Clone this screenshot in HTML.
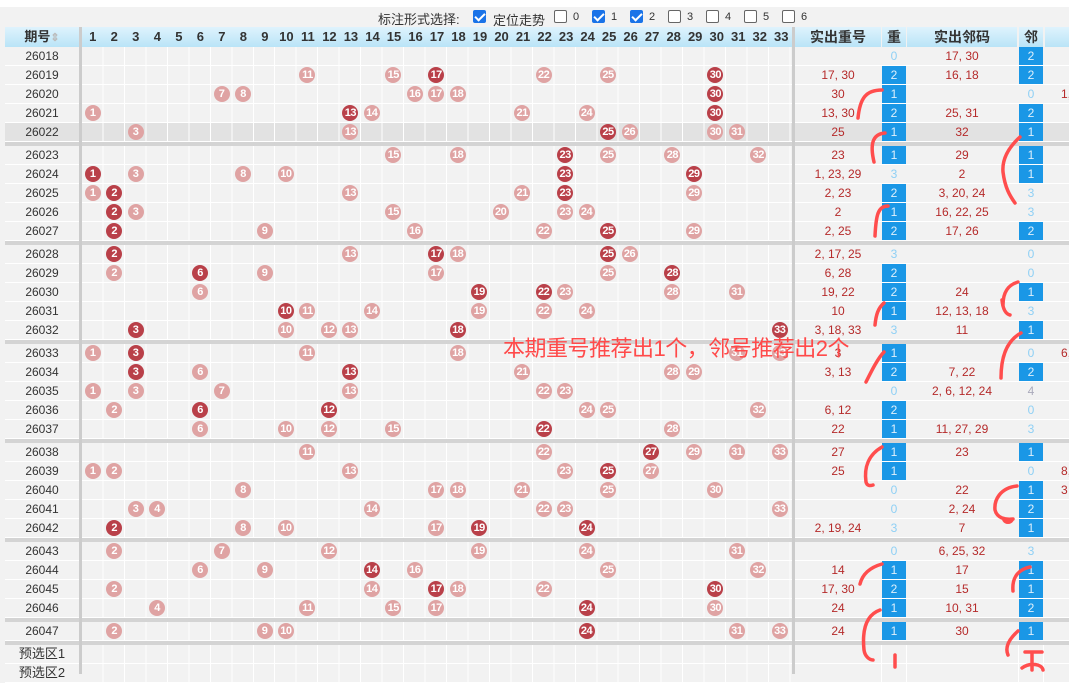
<!DOCTYPE html>
<html><head><meta charset="utf-8"><style>
*{margin:0;padding:0;box-sizing:border-box}
body{width:1069px;height:674px;overflow:hidden;background:#f2f2f2;font-family:"Liberation Sans","Noto Sans CJK SC",sans-serif;position:relative}
.top{position:absolute;left:0;top:0;width:1069px;height:7px;background:#fff}
.bar{position:absolute;top:9px;left:378px;font-size:13px;color:#333;white-space:nowrap}
.cb{position:absolute;top:10px;width:13px;height:13px;border:1px solid #666;border-radius:2px;background:#fff}
.cb.on{background:#1a73e8;border-color:#1a73e8}
.cb.on:after{content:"";position:absolute;left:3px;top:0px;width:4px;height:8px;border:solid #fff;border-width:0 2px 2px 0;transform:rotate(45deg)}
.lb{position:absolute;top:11px;font-size:11px;color:#333}
.hd{position:absolute;top:27px;height:20px;background:linear-gradient(#dff3fd,#b9e4f7);font-weight:bold;font-size:13px;color:#333;text-align:center;line-height:20px}
.r{position:absolute;left:5px;width:1064px;height:19px;border-bottom:1px solid #fff}
.r.g{background:#e2e2e2}
.p{position:absolute;left:0;width:74px;text-align:center;font-size:12px;line-height:18px;color:#333}
.grid{position:absolute;left:77px;width:710px;height:18px;background:repeating-linear-gradient(90deg,transparent 0 20.47px,#fff 20.47px 21.47px)}
.vl{position:absolute;top:27px;width:3px;height:647px;background:#ccc}
.sep{position:absolute;left:5px;width:1064px;height:4px;background:#d4d4d4}
.b{position:absolute;top:1px;width:16px;height:16px;border-radius:50%;background:#dfa3a3;color:#fff;font-style:normal;font-weight:bold;font-size:11px;line-height:16px;text-align:center;letter-spacing:-0.5px}
.b.d{background:#b94049}
.t1{position:absolute;left:790px;width:86px;text-align:center;font-size:12px;line-height:18px;color:#b52a2a}
.t2{position:absolute;left:902px;width:110px;text-align:center;font-size:12px;line-height:18px;color:#b52a2a}
.x{position:absolute;left:1056px;font-size:12px;line-height:18px;color:#b52a2a}
.k1,.k2{position:absolute;top:0;width:24px;height:18px;text-align:center;font-size:12px;line-height:18px;color:#dff0fb;background:#1a97e6}
.k1{left:877px}.k2{left:1014px}
.k1.n,.k2.n{background:none;color:#8fd0f5}
.cl{position:absolute;top:0;width:1px;height:18px;background:#fff}
.c1{left:79.7px}.c2{left:101.2px}.c3{left:122.6px}.c4{left:144.1px}.c5{left:165.6px}.c6{left:187.1px}.c7{left:208.5px}.c8{left:230px}.c9{left:251.5px}.c10{left:272.9px}.c11{left:294.4px}.c12{left:315.9px}.c13{left:337.4px}.c14{left:358.8px}.c15{left:380.3px}.c16{left:401.8px}.c17{left:423.2px}.c18{left:444.7px}.c19{left:466.2px}.c20{left:487.6px}.c21{left:509.1px}.c22{left:530.6px}.c23{left:552.1px}.c24{left:573.5px}.c25{left:595px}.c26{left:616.5px}.c27{left:637.9px}.c28{left:659.4px}.c29{left:680.9px}.c30{left:702.4px}.c31{left:723.8px}.c32{left:745.3px}.c33{left:766.8px}
.note{position:absolute;left:503px;top:331px;font-size:22px;color:#ff4a4a;white-space:nowrap;letter-spacing:-0.5px}
</style></head><body>
<div class="top"></div>
<div class="bar">标注形式选择:</div>
<span class="cb on" style="left:473px"></span><span class="lb" style="left:493px;font-size:13px;top:10px">定位走势</span>
<span class="cb" style="left:554px"></span><span class="lb" style="left:573px">0</span>
<span class="cb on" style="left:592px"></span><span class="lb" style="left:611px">1</span>
<span class="cb on" style="left:630px"></span><span class="lb" style="left:649px">2</span>
<span class="cb" style="left:668px"></span><span class="lb" style="left:687px">3</span>
<span class="cb" style="left:706px"></span><span class="lb" style="left:725px">4</span>
<span class="cb" style="left:744px"></span><span class="lb" style="left:763px">5</span>
<span class="cb" style="left:782px"></span><span class="lb" style="left:801px">6</span>

<div class="hd" style="left:5px;width:74px">期号<span style="color:#bbb;font-size:11px">⇕</span></div>
<div class="hd" style="left:82px;width:710px;background:linear-gradient(#dff3fd,#b9e4f7);display:flex">
<span style="flex:1">1</span><span style="flex:1">2</span><span style="flex:1">3</span><span style="flex:1">4</span><span style="flex:1">5</span><span style="flex:1">6</span><span style="flex:1">7</span><span style="flex:1">8</span><span style="flex:1">9</span><span style="flex:1">10</span><span style="flex:1">11</span><span style="flex:1">12</span><span style="flex:1">13</span><span style="flex:1">14</span><span style="flex:1">15</span><span style="flex:1">16</span><span style="flex:1">17</span><span style="flex:1">18</span><span style="flex:1">19</span><span style="flex:1">20</span><span style="flex:1">21</span><span style="flex:1">22</span><span style="flex:1">23</span><span style="flex:1">24</span><span style="flex:1">25</span><span style="flex:1">26</span><span style="flex:1">27</span><span style="flex:1">28</span><span style="flex:1">29</span><span style="flex:1">30</span><span style="flex:1">31</span><span style="flex:1">32</span><span style="flex:1">33</span></div>
<div class="hd" style="left:795px;width:86px;font-size:14px">实出重号</div>
<div class="hd" style="left:882px;width:24px;font-size:14px">重</div>
<div class="hd" style="left:907px;width:110px;font-size:14px">实出邻码</div>
<div class="hd" style="left:1019px;width:24px;font-size:14px">邻</div>
<div class="hd" style="left:1045px;width:24px"></div>

<!-- group 1 -->
<div class="r" style="top:47px"><div class="p">26018</div><div class="grid"></div><span class="k1 n">0</span><div class="t2">17, 30</div><span class="k2">2</span></div>
<div class="r" style="top:66px"><div class="p">26019</div><div class="grid"></div><i class="b c11">11</i><i class="b c15">15</i><i class="b d c17">17</i><i class="b c22">22</i><i class="b c25">25</i><i class="b d c30">30</i><div class="t1">17, 30</div><span class="k1">2</span><div class="t2">16, 18</div><span class="k2">2</span></div>
<div class="r" style="top:85px"><div class="p">26020</div><div class="grid"></div><i class="b c7">7</i><i class="b c8">8</i><i class="b c16">16</i><i class="b c17">17</i><i class="b c18">18</i><i class="b d c30">30</i><div class="t1">30</div><span class="k1">1</span><span class="k2 n">0</span><div class="x">1,</div></div>
<div class="r" style="top:104px"><div class="p">26021</div><div class="grid"></div><i class="b c1">1</i><i class="b d c13">13</i><i class="b c14">14</i><i class="b c21">21</i><i class="b c24">24</i><i class="b d c30">30</i><div class="t1">13, 30</div><span class="k1">2</span><div class="t2">25, 31</div><span class="k2">2</span></div>
<div class="r g" style="top:123px"><div class="p">26022</div><div class="grid"></div><i class="b c3">3</i><i class="b c13">13</i><i class="b d c25">25</i><i class="b c26">26</i><i class="b c30">30</i><i class="b c31">31</i><div class="t1">25</div><span class="k1">1</span><div class="t2">32</div><span class="k2">1</span></div>
<div class="sep" style="top:142px"></div>
<!-- group 2 -->
<div class="r" style="top:146px"><div class="p">26023</div><div class="grid"></div><i class="b c15">15</i><i class="b c18">18</i><i class="b d c23">23</i><i class="b c25">25</i><i class="b c28">28</i><i class="b c32">32</i><div class="t1">23</div><span class="k1">1</span><div class="t2">29</div><span class="k2">1</span></div>
<div class="r" style="top:165px"><div class="p">26024</div><div class="grid"></div><i class="b d c1">1</i><i class="b c3">3</i><i class="b c8">8</i><i class="b c10">10</i><i class="b d c23">23</i><i class="b d c29">29</i><div class="t1">1, 23, 29</div><span class="k1 n">3</span><div class="t2">2</div><span class="k2">1</span></div>
<div class="r" style="top:184px"><div class="p">26025</div><div class="grid"></div><i class="b c1">1</i><i class="b d c2">2</i><i class="b c13">13</i><i class="b c21">21</i><i class="b d c23">23</i><i class="b c29">29</i><div class="t1">2, 23</div><span class="k1">2</span><div class="t2">3, 20, 24</div><span class="k2 n">3</span></div>
<div class="r" style="top:203px"><div class="p">26026</div><div class="grid"></div><i class="b d c2">2</i><i class="b c3">3</i><i class="b c15">15</i><i class="b c20">20</i><i class="b c23">23</i><i class="b c24">24</i><div class="t1">2</div><span class="k1">1</span><div class="t2">16, 22, 25</div><span class="k2 n">3</span></div>
<div class="r" style="top:222px"><div class="p">26027</div><div class="grid"></div><i class="b d c2">2</i><i class="b c9">9</i><i class="b c16">16</i><i class="b c22">22</i><i class="b d c25">25</i><i class="b c29">29</i><div class="t1">2, 25</div><span class="k1">2</span><div class="t2">17, 26</div><span class="k2">2</span></div>
<div class="sep" style="top:241px"></div>
<!-- group 3 -->
<div class="r" style="top:245px"><div class="p">26028</div><div class="grid"></div><i class="b d c2">2</i><i class="b c13">13</i><i class="b d c17">17</i><i class="b c18">18</i><i class="b d c25">25</i><i class="b c26">26</i><div class="t1">2, 17, 25</div><span class="k1 n">3</span><span class="k2 n">0</span></div>
<div class="r" style="top:264px"><div class="p">26029</div><div class="grid"></div><i class="b c2">2</i><i class="b d c6">6</i><i class="b c9">9</i><i class="b c17">17</i><i class="b c25">25</i><i class="b d c28">28</i><div class="t1">6, 28</div><span class="k1">2</span><span class="k2 n">0</span></div>
<div class="r" style="top:283px"><div class="p">26030</div><div class="grid"></div><i class="b c6">6</i><i class="b d c19">19</i><i class="b d c22">22</i><i class="b c23">23</i><i class="b c28">28</i><i class="b c31">31</i><div class="t1">19, 22</div><span class="k1">2</span><div class="t2">24</div><span class="k2">1</span></div>
<div class="r" style="top:302px"><div class="p">26031</div><div class="grid"></div><i class="b d c10">10</i><i class="b c11">11</i><i class="b c14">14</i><i class="b c19">19</i><i class="b c22">22</i><i class="b c24">24</i><div class="t1">10</div><span class="k1">1</span><div class="t2">12, 13, 18</div><span class="k2 n">3</span></div>
<div class="r" style="top:321px"><div class="p">26032</div><div class="grid"></div><i class="b d c3">3</i><i class="b c10">10</i><i class="b c12">12</i><i class="b c13">13</i><i class="b d c18">18</i><i class="b d c33">33</i><div class="t1">3, 18, 33</div><span class="k1 n">3</span><div class="t2">11</div><span class="k2">1</span></div>
<div class="sep" style="top:340px"></div>
<!-- group 4 -->
<div class="r" style="top:344px"><div class="p">26033</div><div class="grid"></div><i class="b c1">1</i><i class="b d c3">3</i><i class="b c11">11</i><i class="b c18">18</i><i class="b c31">31</i><i class="b c33">33</i><div class="t1">3</div><span class="k1">1</span><span class="k2 n">0</span><div class="x">6,</div></div>
<div class="r" style="top:363px"><div class="p">26034</div><div class="grid"></div><i class="b d c3">3</i><i class="b c6">6</i><i class="b d c13">13</i><i class="b c21">21</i><i class="b c28">28</i><i class="b c29">29</i><div class="t1">3, 13</div><span class="k1">2</span><div class="t2">7, 22</div><span class="k2">2</span></div>
<div class="r" style="top:382px"><div class="p">26035</div><div class="grid"></div><i class="b c1">1</i><i class="b c3">3</i><i class="b c7">7</i><i class="b c13">13</i><i class="b c22">22</i><i class="b c23">23</i><span class="k1 n">0</span><div class="t2">2, 6, 12, 24</div><span class="k2 n" style="color:#aab">4</span></div>
<div class="r" style="top:401px"><div class="p">26036</div><div class="grid"></div><i class="b c2">2</i><i class="b d c6">6</i><i class="b d c12">12</i><i class="b c24">24</i><i class="b c25">25</i><i class="b c32">32</i><div class="t1">6, 12</div><span class="k1">2</span><span class="k2 n">0</span></div>
<div class="r" style="top:420px"><div class="p">26037</div><div class="grid"></div><i class="b c6">6</i><i class="b c10">10</i><i class="b c12">12</i><i class="b c15">15</i><i class="b d c22">22</i><i class="b c28">28</i><div class="t1">22</div><span class="k1">1</span><div class="t2">11, 27, 29</div><span class="k2 n">3</span></div>
<div class="sep" style="top:439px"></div>
<!-- group 5 -->
<div class="r" style="top:443px"><div class="p">26038</div><div class="grid"></div><i class="b c11">11</i><i class="b c22">22</i><i class="b d c27">27</i><i class="b c29">29</i><i class="b c31">31</i><i class="b c33">33</i><div class="t1">27</div><span class="k1">1</span><div class="t2">23</div><span class="k2">1</span></div>
<div class="r" style="top:462px"><div class="p">26039</div><div class="grid"></div><i class="b c1">1</i><i class="b c2">2</i><i class="b c13">13</i><i class="b c23">23</i><i class="b d c25">25</i><i class="b c27">27</i><div class="t1">25</div><span class="k1">1</span><span class="k2 n">0</span><div class="x">8,</div></div>
<div class="r" style="top:481px"><div class="p">26040</div><div class="grid"></div><i class="b c8">8</i><i class="b c17">17</i><i class="b c18">18</i><i class="b c21">21</i><i class="b c25">25</i><i class="b c30">30</i><span class="k1 n">0</span><div class="t2">22</div><span class="k2">1</span><div class="x">3</div></div>
<div class="r" style="top:500px"><div class="p">26041</div><div class="grid"></div><i class="b c3">3</i><i class="b c4">4</i><i class="b c14">14</i><i class="b c22">22</i><i class="b c23">23</i><i class="b c33">33</i><span class="k1 n">0</span><div class="t2">2, 24</div><span class="k2">2</span></div>
<div class="r" style="top:519px"><div class="p">26042</div><div class="grid"></div><i class="b d c2">2</i><i class="b c8">8</i><i class="b c10">10</i><i class="b c17">17</i><i class="b d c19">19</i><i class="b d c24">24</i><div class="t1">2, 19, 24</div><span class="k1 n">3</span><div class="t2">7</div><span class="k2">1</span></div>
<div class="sep" style="top:538px"></div>
<!-- group 6 -->
<div class="r" style="top:542px"><div class="p">26043</div><div class="grid"></div><i class="b c2">2</i><i class="b c7">7</i><i class="b c12">12</i><i class="b c19">19</i><i class="b c24">24</i><i class="b c31">31</i><span class="k1 n">0</span><div class="t2">6, 25, 32</div><span class="k2 n">3</span></div>
<div class="r" style="top:561px"><div class="p">26044</div><div class="grid"></div><i class="b c6">6</i><i class="b c9">9</i><i class="b d c14">14</i><i class="b c16">16</i><i class="b c25">25</i><i class="b c32">32</i><div class="t1">14</div><span class="k1">1</span><div class="t2">17</div><span class="k2">1</span></div>
<div class="r" style="top:580px"><div class="p">26045</div><div class="grid"></div><i class="b c2">2</i><i class="b c14">14</i><i class="b d c17">17</i><i class="b c18">18</i><i class="b c22">22</i><i class="b d c30">30</i><div class="t1">17, 30</div><span class="k1">2</span><div class="t2">15</div><span class="k2">1</span></div>
<div class="r" style="top:599px"><div class="p">26046</div><div class="grid"></div><i class="b c4">4</i><i class="b c11">11</i><i class="b c15">15</i><i class="b c17">17</i><i class="b d c24">24</i><i class="b c30">30</i><div class="t1">24</div><span class="k1">1</span><div class="t2">10, 31</div><span class="k2">2</span></div>
<div class="sep" style="top:618px"></div>
<div class="r" style="top:622px"><div class="p">26047</div><div class="grid"></div><i class="b c2">2</i><i class="b c9">9</i><i class="b c10">10</i><i class="b d c24">24</i><i class="b c31">31</i><i class="b c33">33</i><div class="t1">24</div><span class="k1">1</span><div class="t2">30</div><span class="k2">1</span></div>
<div class="sep" style="top:641px"></div>
<div class="r" style="top:645px"><div class="p" style="font-size:13px">预选区1</div><div class="grid"></div><span class="cl" style="left:876px"></span><span class="cl" style="left:901px"></span><span class="cl" style="left:1013px"></span><span class="cl" style="left:1038px"></span></div>
<div class="r" style="top:664px"><div class="p" style="font-size:13px">预选区2</div><div class="grid"></div><span class="cl" style="left:876px"></span><span class="cl" style="left:901px"></span><span class="cl" style="left:1013px"></span><span class="cl" style="left:1038px"></span></div>

<div class="vl" style="left:79px"></div>
<div class="vl" style="left:792px"></div>

<div class="note">本期重号推荐出1个，邻号推荐出2个</div>

<svg width="1069" height="674" style="position:absolute;left:0;top:0" fill="none" stroke="#ff4d4d" stroke-width="3.5" stroke-linecap="round">
<path d="M882,90 C866,90 860,98 858,118"/>
<path d="M885,133 C872,134 870,145 874,162"/>
<path d="M1020,137 C1008,148 1002,160 1003,172 C1005,188 1010,196 1015,203"/>
<path d="M888,206 C878,206 876,215 875,236"/>
<path d="M1018,282 C1008,285 1003,292 1003,305"/>
<path d="M884,303 C878,308 876,315 875,325"/>
<path d="M1002,300 C1003,310 1006,314 1010,315"/>
<path d="M1021,333 C1008,340 1001,355 1001,378"/>
<path d="M884,352 C878,358 872,370 866,382"/>
<path d="M882,447 C868,455 864,468 866,482 C867,486 870,486 873,485"/>
<path d="M1017,486 C1000,488 994,500 995,510 C997,518 1005,520 1013,519"/>
<path d="M1004,520 C1006,523 1010,523 1012,520"/>
<path d="M882,564 C868,568 862,576 860,584"/>
<path d="M1030,567 C1016,570 1012,580 1013,591"/>
<path d="M880,610 C866,615 862,630 864,650 C865,657 870,660 873,660"/>
<path d="M895,655 L895,667"/>
<path d="M1018,631 C1008,640 1005,648 1008,655"/>
<path d="M1025,652 L1042,652 M1032,652 L1032,670 M1022,668 C1030,662 1042,664 1043,670"/>
</svg>
</body></html>
